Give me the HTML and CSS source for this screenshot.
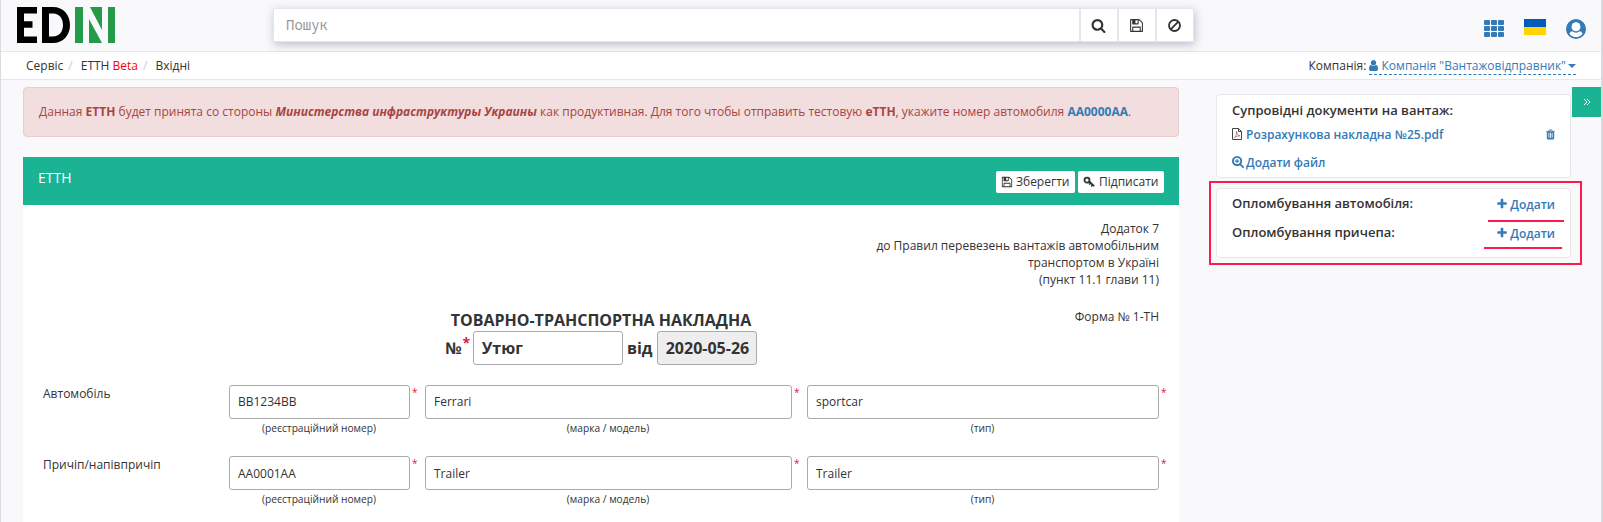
FILE: index.html
```html
<!DOCTYPE html>
<html lang="uk">
<head>
<meta charset="utf-8">
<title>ЕТТН</title>
<link rel="stylesheet" href="styles.css">
</head>
<body>
<svg class="defs" aria-hidden="true">
  <symbol id="search" viewBox="0 0 1792 1792"><path d="M1216 832q0-185-131.500-316.500t-316.500-131.500-316.500 131.500-131.500 316.500 131.500 316.500 316.500 131.500 316.500-131.500 131.500-316.500zm512 832q0 52-38 90t-90 38q-54 0-90-38l-343-342q-179 124-399 124-143 0-273.500-55.500t-225-150-150-225-55.500-273.500 55.500-273.500 150-225 225-150 273.500-55.500 273.500 55.500 225 150 150 225 55.500 273.500q0 220-124 399l343 343q37 37 37 90z"/></symbol>
  <symbol id="floppy" viewBox="0 0 1792 1792"><path d="M512 1536h768v-384h-768v384zm896 0h128v-896q0-14-10-38.500t-20-34.500l-281-281q-10-10-34-20t-39-10v416q0 40-28 68t-68 28h-576q-40 0-68-28t-28-68v-416h-128v1280h128v-416q0-40 28-68t68-28h832q40 0 68 28t28 68v416zm-384-928v-320q0-13-9.500-22.500t-22.500-9.500h-192q-13 0-22.500 9.500t-9.500 22.500v320q0 13 9.500 22.500t22.500 9.500h192q13 0 22.500-9.500t9.500-22.500zm640 32v928q0 40-28 68t-68 28h-1344q-40 0-68-28t-28-68v-1344q0-40 28-68t68-28h928q40 0 88 20t76 48l280 280q28 28 48 76t20 88z"/></symbol>
  <symbol id="ban" viewBox="0 0 1792 1792"><g fill="none" stroke="currentColor" stroke-width="220"><circle cx="896" cy="896" r="655"/><path d="M1350 440L440 1350"/></g></symbol>
  <symbol id="plus" viewBox="192 0 1408 1792"><path d="M1600 736v192q0 40-28 68t-68 28h-416v416q0 40-28 68t-68 28h-192q-40 0-68-28t-28-68v-416h-416q-40 0-68-28t-28-68v-192q0-40 28-68t68-28h416v-416q0-40 28-68t68-28h192q40 0 68 28t28 68v416h416q40 0 68 28t28 68z"/></symbol>
  <symbol id="user" viewBox="256 128 1280 1536"><path d="M1536 1399q0 109-62.500 187t-150.500 78h-854q-88 0-150.500-78t-62.500-187q0-85 8.500-160.500t31.500-152 58.500-131 94-89 134.500-34.500q131 128 313 128t313-128q76 0 134.500 34.500t94 89 58.500 131 31.500 152 8.500 160.500zm-256-887q0 159-112.500 271.500t-271.500 112.500-271.500-112.500-112.500-271.500 112.500-271.500 271.500-112.500 271.500 112.500 112.500 271.500z"/></symbol>
  <symbol id="trash" viewBox="192 128 1408 1536"><path d="M704 1376v-704q0-14-9-23t-23-9h-64q-14 0-23 9t-9 23v704q0 14 9 23t23 9h64q14 0 23-9t9-23zm256 0v-704q0-14-9-23t-23-9h-64q-14 0-23 9t-9 23v704q0 14 9 23t23 9h64q14 0 23-9t9-23zm256 0v-704q0-14-9-23t-23-9h-64q-14 0-23 9t-9 23v704q0 14 9 23t23 9h64q14 0 23-9t9-23zm-544-992h448l-48-117q-7-9-17-11h-317q-10 2-17 11zm928 32v64q0 14-9 23t-23 9h-96v948q0 83-47 143.500t-113 60.500h-832q-66 0-113-58.500t-47-141.500v-952h-96q-14 0-23-9t-9-23v-64q0-14 9-23t23-9h309l70-167q15-37 54-63t79-26h320q40 0 79 26t54 63l70 167h309q14 0 23 9t9 23z"/></symbol>
</svg>

<div class="page">
  <header class="topbar">
    <svg class="logo" viewBox="0 0 98 36">
      <path d="M0 0h20v6.500H7v7.700h8.500v6.500H7v8.800h13V36H0z"/>
      <path fill-rule="evenodd" d="M25 0h11c10.500 0 17 8 17 18s-6.500 18-17 18H25zM32 6.500v23h4c6.500 0 10-5 10-11.500S42.500 6.500 36 6.500z"/>
      <path class="logo-green" d="M58 0h8v36h-8zM73 0h12v23zM72 12l13 24H72zM91 0h7v36h-7z"/>
    </svg>
    <div class="search">
      <div class="search-input">Пошук</div>
      <div class="search-btn"><svg class="ico14"><use href="#search"/></svg></div>
      <div class="search-btn"><svg class="ico14"><use href="#floppy"/></svg></div>
      <div class="search-btn"><svg class="ico14"><use href="#ban"/></svg></div>
    </div>
    <div class="tools">
      <svg class="apps" viewBox="0 0 20 17"><path d="M1 0h4q1 0 1 1v3q0 1-1 1H1q-1 0-1-1V1q0-1 1-1zm7 0h4q1 0 1 1v3q0 1-1 1H8q-1 0-1-1V1q0-1 1-1zm7 0h4q1 0 1 1v3q0 1-1 1h-4q-1 0-1-1V1q0-1 1-1zM1 6h4q1 0 1 1v3q0 1-1 1H1q-1 0-1-1V7q0-1 1-1zm7 0h4q1 0 1 1v3q0 1-1 1H8q-1 0-1-1V7q0-1 1-1zm7 0h4q1 0 1 1v3q0 1-1 1h-4q-1 0-1-1V7q0-1 1-1zM1 12h4q1 0 1 1v3q0 1-1 1H1q-1 0-1-1v-3q0-1 1-1zm7 0h4q1 0 1 1v3q0 1-1 1H8q-1 0-1-1v-3q0-1 1-1zm7 0h4q1 0 1 1v3q0 1-1 1h-4q-1 0-1-1v-3q0-1 1-1z"/></svg>
      <div class="flag"></div>
      <svg class="avatar" viewBox="0 0 20 20"><circle cx="10" cy="10" r="10"/><circle cx="10" cy="7.800" r="4.500" fill="#fff"/><path d="M3.400 14.800c.6-1.800 1.500-2.500 2.800-2.600a5.600 5.600 0 0 0 7.600 0c1.300.1 2.200.8 2.800 2.600a8.300 8.300 0 0 1-13.200 0z" fill="#fff"/></svg>
    </div>
  </header>

  <nav class="crumbs">
    <div class="crumb-list"><span>Сервіс</span><i>/</i><span>ЕТТН <b>Beta</b></span><i>/</i><span>Вхідні</span></div>
    <div class="company">Компанія: <a><svg class="ico-user"><use href="#user"/></svg> Компанія "Вантажовідправник" <i class="caret"></i></a></div>
  </nav>

  <div class="body">
    <main class="main">
      <div class="alert">Данная <b>ЕТТН</b> будет принята со стороны <b><i>Министерства инфраструктуры Украины</i></b> как продуктивная. Для того чтобы отправить тестовую <b>еТТН</b>, укажите номер автомобиля <b class="blue">АА0000АА</b>.</div>
      <div class="panel-head">
        <div class="panel-title">ЕТТН</div>
        <div class="btns">
          <div class="btn save"><svg class="ico12"><use href="#floppy"/></svg>Зберегти</div>
          <div class="btn sign"><svg class="ico12" viewBox="0 0 12 12"><circle cx="4" cy="4.200" r="2.500" fill="none" stroke="currentColor" stroke-width="1.800"/><path d="M5.200 6l1.300-1.500 5.300 5-1.200 1.300-1-.8-.9.900-1-.9.8-1-.9-.8-.9.800-.9-.8.500-.9z"/></svg>Підписати</div>
        </div>
      </div>
      <div class="form">
        <div class="annex">Додаток 7<br>до Правил перевезень вантажів автомобільним<br>транспортом в Україні<br>(пункт 11.1 глави 11)</div>
        <div class="title-row">
          <div class="title">
            <div>ТОВАРНО-ТРАНСПОРТНА НАКЛАДНА</div>
            <div class="num-line"><span>№</span><em>*</em><div class="num">Утюг</div><span class="from">від</span><div class="date">2020-05-26</div></div>
          </div>
          <div class="form-no">Форма № 1-ТН</div>
        </div>
        <div class="row">
          <div class="label">Автомобіль</div>
          <div class="field"><div class="input">BB1234BB</div><em>*</em><small>(реєстраційний номер)</small></div>
          <div class="field"><div class="input">Ferrari</div><em>*</em><small>(марка / модель)</small></div>
          <div class="field"><div class="input">sportcar</div><em>*</em><small>(тип)</small></div>
        </div>
        <div class="row second">
          <div class="label">Причіп/напівпричіп</div>
          <div class="field"><div class="input">AA0001AA</div><em>*</em><small>(реєстраційний номер)</small></div>
          <div class="field"><div class="input">Trailer</div><em>*</em><small>(марка / модель)</small></div>
          <div class="field"><div class="input">Trailer</div><em>*</em><small>(тип)</small></div>
        </div>
      </div>
    </main>
    <aside class="side">
      <div class="card docs">
        <div class="card-title">Супровідні документи на вантаж:</div>
        <div class="line file"><a><svg class="pdf" viewBox="0 0 10 12"><path d="M.5.500h6l3 3v8h-9zM6.500.500v3h3" fill="none" stroke="#444"/><path d="M2.300 9.800C4 8.500 5 6 4.500 3.500c.3 2.700 1.700 4 3.500 4.400-2-.2-4 .4-5.700 1.900z" fill="none" stroke="#a55" stroke-width=".7"/></svg>Розрахункова накладна №25.pdf</a><svg class="bin"><use href="#trash"/></svg></div>
        <div class="line add-file"><a><svg class="ico12" viewBox="64 128 1664 1664"><use href="#search" width="1792" height="1792"/><path d="M690 530h156v224h224v156H846v224H690V910H466V754h224z"/></svg>Додати файл</a></div>
      </div>
      <div class="card seals">
        <div class="seal"><div class="card-title">Опломбування автомобіля:</div><a><svg class="plus"><use href="#plus"/></svg>Додати</a></div>
        <div class="seal"><div class="card-title">Опломбування причепа:</div><a><svg class="plus"><use href="#plus"/></svg>Додати</a></div>
        <div class="mark"></div>
        <div class="stroke s1"></div>
        <div class="stroke s2"></div>
      </div>
    </aside>
    <div class="toggle"><svg viewBox="0 0 8 8"><path d="M1 1l3 3-3 3M4 1l3 3-3 3" fill="none" stroke="#fff"/></svg></div>
  </div>
</div>
</body>
</html>
```
FILE: styles.css
```css
* { box-sizing: border-box; }
body { margin: 0; background: #f9f9fb; color: #333; font: 12px/17px "Open Sans", "Noto Sans", sans-serif; }
.defs { position: absolute; width: 0; height: 0; }
svg { fill: currentColor; flex: none; }
.page { height: 522px; overflow: hidden; border-left: 1px solid #dcdce0; border-right: 2px solid #d9d9dc; }
.ico12 { width: 12px; height: 12px; }
.ico14 { width: 14px; height: 14px; }
a, .blue { color: #337ab7; }

.topbar { display: flex; height: 52px; border-bottom: 1px solid #e7e7ea; padding-left: 16px; }
.logo { width: 98px; height: 36px; margin-top: 7px; color: #000; }
.logo-green { fill: #239b48; }
.search { display: flex; width: 921px; height: 34px; margin: 8px 0 0 158px; background: #fff; border: 1px solid #e5e6e9; box-shadow: 1px 3px 9px rgba(60, 60, 110, .3); }
.search-input { flex: 1; padding-left: 12px; font: 14px/32px "Noto Sans Mono", "DejaVu Sans Mono", monospace; color: #999; }
.search-btn { display: flex; width: 38px; align-items: center; justify-content: center; border-left: 2px solid #e5e6e9; }
.search-btn .ico14 { width: 15px; height: 15px; margin-right: 1px; }
.tools { display: flex; flex: 1; justify-content: flex-end; padding: 19px 15px 0 0; color: #337ab7; }
.apps { width: 20px; height: 17px; margin-top: 1px; }
.flag { width: 22px; height: 16px; margin: 0 20px; background: linear-gradient(#005bbb 50%, #ffd500 50%); }
.avatar { width: 20px; height: 20px; }

.crumbs { display: flex; justify-content: space-between; height: 28px; padding: 5px 25px 0; background: #fff; border-bottom: 1px solid #e7e7ea; }
.crumbs b { color: #f00; font-weight: 400; }
.crumb-list i { margin: 0 8px 0 5px; color: #ccc; font-style: normal; }
.company a { display: inline-block; height: 18px; border-bottom: 1px dashed #337ab7; }
.ico-user { width: 9px; height: 11px; vertical-align: -1px; }
.caret { display: inline-block; margin-left: -1px; border: 4px solid transparent; border-top-color: #337ab7; border-bottom: 0; vertical-align: 2px; }

.body { display: flex; }
.main { width: 1156px; margin: 7px 0 0 22px; }
.alert { height: 50px; padding: 15px 15px; color: #a94442; background: #f2dede; border: 1px solid #ebccd1; border-radius: 4px; white-space: nowrap; word-spacing: .03px; }
.panel-head { display: flex; justify-content: space-between; height: 48px; margin-top: 20px; padding: 14px 15px 0; background: #1ab394; }
.panel-title { color: #fff; font-size: 14px; line-height: 14px; }
.btns { display: flex; gap: 3px; }
.btn { display: flex; align-items: center; gap: 3px; height: 22px; padding: 0 5px 1px; background: #fff; border-radius: 2px; }
.save { width: 79px; }
.sign { width: 86px; gap: 4px; }

.form { height: 317px; padding: 15px 20px 0; background: #fff; }
.annex { text-align: right; }
.title-row { display: flex; position: relative; justify-content: center; height: 76px; margin-top: 21px; }
.title { text-align: center; font-size: 16px; font-weight: 700; line-height: 22px; }
.num-line { display: flex; justify-content: center; line-height: 34px; text-align: left; }
.form-no { position: absolute; right: 0; top: -1px; }
em { color: #e1173f; font-style: normal; }
.num-line em { width: 11px; padding-right: 2px; font-size: 14px; line-height: 24px; text-align: center; }
.num, .date { height: 34px; padding-left: 8px; line-height: 33px; border: 1px solid #aaa; border-radius: 3px; }
.num { width: 150px; }
.date { width: 100px; background: #eee; }
.from { width: 34px; text-align: center; }
.row { display: grid; grid-template-columns: 171px 181px 367px 352px; column-gap: 15px; height: 71px; }
.field { position: relative; text-align: center; }
.field em { position: absolute; left: calc(100% + 2px); top: 0; font-size: 10px; line-height: 14px; }
.field small { display: block; margin-right: 1px; font-size: 10.2px; line-height: 18px; }
.input { height: 34px; padding-left: 8px; border: 1px solid #aaa; border-radius: 3px; line-height: 32px; text-align: left; }
.second .input { line-height: 34px; }

.side { width: 355px; margin: 14px 0 0 37px; }
.card { padding: 0 15px; background: #fff; border: 1px solid #e7e7ec; border-radius: 4px; font-weight: 600; }
.card-title { font-size: 13px; line-height: 18px; }
.card a { display: flex; align-items: center; gap: 3px; }
.docs { height: 84px; padding-top: 6px; }
.line { display: flex; justify-content: space-between; align-items: center; color: #337ab7; }
.file { height: 30px; }
.add-file { height: 26px; }
.file a { gap: 4px; }
.add-file a { gap: 2px; }
.pdf { width: 10px; height: 12px; }
.bin { width: 9px; height: 11px; }
.seals { position: relative; height: 70px; margin-top: 10px; padding-top: 5px; }
.seal { display: flex; justify-content: space-between; height: 29px; }
.seal a { height: 20px; }
.plus { width: 10px; height: 12px; }
.mark { position: absolute; left: -8px; top: -8px; width: 373px; height: 84px; border: 2px solid #ff1a4d; }
.stroke { position: absolute; height: 2px; background: #ff1a4d; }
.s1 { left: 271px; top: 31px; width: 76px; }
.s2 { left: 267px; top: 58px; width: 78px; }
.toggle { display: flex; align-items: center; justify-content: center; width: 29px; height: 30px; margin: 7px 0 0 auto; background: #1ab394; }
.toggle svg { width: 8px; height: 8px; }
```
